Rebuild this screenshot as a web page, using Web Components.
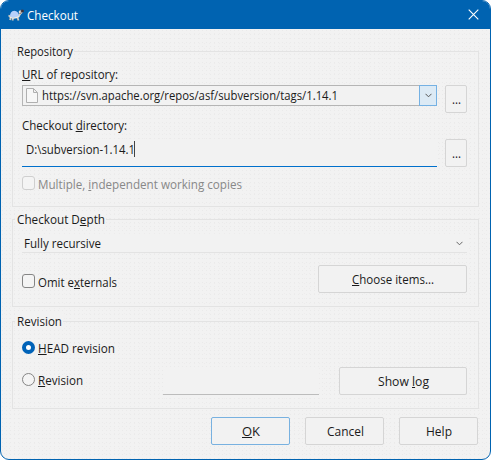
<!DOCTYPE html>
<html lang="en"><head><meta charset="utf-8"><title>Checkout</title>
<style>
html,body{margin:0;background:#fff}
body{font:12.5px/16px "Open Sans","Noto Sans",sans-serif;color:#1b1b1b}
.row{display:flex}
.between{display:flex;justify-content:space-between}
</style></head><body>
<checkout-dialog>
 <fit-text slot="title" w="50">Checkout</fit-text>
 <group-box style="height:156px"><fit-text slot="legend" w="55">Repository</fit-text>
  <fit-text w="95" style="margin-top:14px"><u>U</u>RL of repository:</fit-text>
  <div class="between" style="margin-top:3px"><url-combo><fit-text w="295">https://svn.apache.org/repos/asf/subversion/tags/1.14.1</fit-text></url-combo><push-button style="width:22px;height:28px"><fit-text w="8">...</fit-text></push-button></div>
  <fit-text w="104" style="margin-top:4px">Checkout <u>d</u>irectory:</fit-text>
  <div class="between" style="margin-top:6px"><text-field active style="width:415px"><fit-text w="108">D:\subversion-1.14.1</fit-text></text-field><push-button style="width:22px"><fit-text w="8">...</fit-text></push-button></div>
  <check-mark disabled style="margin-top:8px"><fit-text w="203">Multiple, <u>i</u>ndependent working copies</fit-text></check-mark>
 </group-box>
 <group-box style="height:88px;margin-top:12px"><fit-text slot="legend" w="87">Checkout D<u>e</u>pth</fit-text>
  <depth-select style="margin-top:14px"><fit-text w="76">Fully recursive</fit-text></depth-select>
  <div class="between" style="margin-top:12px"><check-mark style="margin-top:8px"><fit-text w="78">Omit e<u>x</u>ternals</fit-text></check-mark><push-button style="width:149px"><fit-text w="81"><u>C</u>hoose items...</fit-text></push-button></div>
 </group-box>
 <group-box style="height:88px;margin-top:14px"><fit-text slot="legend" w="44">Revision</fit-text>
  <check-mark radio checked style="margin-top:18px"><fit-text w="76"><u>H</u>EAD revision</fit-text></check-mark>
  <div class="row" style="margin-top:11px"><check-mark radio style="margin-top:5px;width:141px"><fit-text w="44"><u>R</u>evision</fit-text></check-mark><text-field style="width:156px"></text-field><push-button style="width:128px;margin-left:20px"><fit-text w="50">Show <u>l</u>og</fit-text></push-button></div>
 </group-box>
 <push-button slot="actions" primary style="width:79px"><fit-text w="17"><u>O</u>K</fit-text></push-button>
 <push-button slot="actions" style="width:79px"><fit-text w="36">Cancel</fit-text></push-button>
 <push-button slot="actions" style="width:79px"><fit-text w="25">Help</fit-text></push-button>
</checkout-dialog>
<script>
function define(name, html, setup){
  customElements.define(name, class extends HTMLElement{
    constructor(){ super(); this.attachShadow({mode:"open"}).innerHTML = html; }
    connectedCallback(){ if(setup) setup(this); }
  });
}
// Label condensed horizontally to occupy the width given in "w".
define("fit-text", `<style>:host{display:block;white-space:pre;height:16px;flex:none}span{display:inline-block;padding-top:1px;transform-origin:0 0}::slotted(u){text-decoration-thickness:1px;text-underline-offset:1px;text-decoration-skip-ink:none}</style><span><slot></slot></span>`, el => {
  const s = el.shadowRoot.querySelector("span"), w = +el.getAttribute("w");
  s.style.transform = "scaleX(" + (w + 1) / s.getBoundingClientRect().width + ")";
  el.style.width = w + "px";
});
define("checkout-dialog", `<style>
:host{display:flex;flex-direction:column;box-sizing:border-box;width:491px;height:460px;border:1px solid #0063b1;border-radius:9px;overflow:hidden;
 background-color:#f2f2f2;
 background-image:radial-gradient(circle at 1.5px 1.5px,#eaeaea .7px,transparent .8px),radial-gradient(circle at 3.5px 2.5px,#edebeb .7px,transparent .8px);background-size:4px 4px,5px 5px}
header{display:flex;height:28px;flex:none;background:#0063b1;color:#fff;padding:0 11px 0 7px}
.turtle{margin-top:7px;width:16px;height:14px}.title{margin:6px auto 0 3px}.close{margin-top:8px;width:11px;height:11px}
main{padding:22px 11px 0}
footer{display:flex;justify-content:flex-end;gap:15px;padding:8px 12px 0}
</style><header>
<svg class="turtle" viewBox="0 0 16 14"><path d="M3 9L2 12M5 10L4.5 12.5M9.5 9.5L10.5 12.5M2.5 8.5L.5 7.5" stroke="#d3ccbf" stroke-width="1.8" fill="none"/><path d="M10 9L13 4.5" stroke="#ddd4c6" stroke-width="2.2"/><ellipse cx="12.6" cy="4" rx="2" ry="1.8" fill="#ebe0d4"/><path d="M2 8.8Q1.8 3.2 6.3 2.8Q10.6 3 11 8.2L9 9.6H3.5Z" fill="#b7d0fa"/><path d="M1.5 9Q6 11.2 11.3 8.5" fill="none" stroke="#f0ede8" stroke-width="1.3"/><path d="M13.2 2h2.2v2h-2.2zM11.5 5.5l2-.7" fill="#332d35" stroke="#443b45" stroke-width=".7"/></svg>
<div class="title"><slot name="title"></slot></div>
<svg class="close" viewBox="0 0 11 11"><path d="M.7.7L10.3 10.3M10.3.7L.7 10.3" stroke="#fff" stroke-width="1.1"/></svg>
</header><main><slot></slot></main><footer><slot name="actions"></slot></footer>`);
define("group-box", `<style>
:host{display:grid;grid-template:100%/100%;box-sizing:border-box;width:467px}
.frame,.legend,.body{grid-area:1/1}
.frame{border:1px solid #e3e3e3}
.legend{justify-self:start;align-self:start;height:16px;margin:-8px 0 0 3px;padding:0 2px;background:#f2f2f2}
.body{padding:1px 12px 0 10px;min-width:0}
</style><div class="frame"></div><div class="legend"><slot name="legend"></slot></div><div class="body"><slot></slot></div>`);
define("url-combo", `<style>
:host{display:flex;box-sizing:border-box;width:415px;height:21px;border:1px solid #b5b5b5;background:#f2f2f2}
.page{width:12px;height:15px;margin:2px 4px 0 3px}.label{margin:1px auto 0 0}
.drop{box-sizing:border-box;width:18px;height:21px;margin:-1px -1px 0 0;border:1px solid #75b1e3;background:#dceaf5;display:grid;place-items:center}
</style><svg class="page" viewBox="0 0 12 15"><path d="M.5.5H7.5L11.5 4.5V14.5H.5ZM7.5.5V4.5H11.5" fill="#f7f7f7" stroke="#b0b0b0"/></svg><div class="label"><slot></slot></div><div class="drop"><svg width="7" height="5"><path d="M.5.8L3.5 3.8L6.5.8" fill="none" stroke="#555"/></svg></div>`);
define("push-button", `<style>
:host{display:flex;justify-content:center;box-sizing:border-box;height:28px;border:1px solid #d5d5d5;border-radius:2px;background:#f2f2f2;padding-top:5px}
:host([primary]){border-color:#78b1e0}
</style><slot></slot>`);
define("text-field", `<style>
:host{display:flex;flex-direction:column;box-sizing:border-box;height:28px;background:#f2f2f2}
.value{display:flex;flex:1;padding:2px 0 0 4px}
.line{height:1px;background:#bcbcbc}
:host([active]) .line{background:#0070cc}
i{display:none;width:1px;height:16px;background:#444}:host([active]) i{display:block}
</style><div class="value"><slot></slot><i></i></div><div class="line"></div>`);
define("check-mark", `<style>
:host{display:flex;gap:3px;height:16px}
.mark{box-sizing:border-box;width:13px;height:14px;margin-top:1px;border:1px solid #858585;border-radius:3px;background:#f4f4f4}
.label{margin-top:1px}
:host([radio]) .label{margin-top:0}
:host([radio]) .mark{border-radius:50%;height:13px}
:host([checked]) .mark{border:4px solid #0063b8;background:#fff}
:host([disabled]){color:#888}:host([disabled]) .mark{border-color:#cfcfcf}
</style><div class="mark"></div><div class="label"><slot></slot></div>`);
define("depth-select", `<style>
:host{display:flex;box-sizing:border-box;height:19px;border-bottom:1px solid #e3e3e3;background:#f2f2f2;padding:1px 4px 0 2px;justify-content:space-between}
svg{margin-top:6px}
</style><slot></slot><svg width="7" height="5"><path d="M.5.8L3.5 3.8L6.5.8" fill="none" stroke="#666"/></svg>`);
</script></body></html>
